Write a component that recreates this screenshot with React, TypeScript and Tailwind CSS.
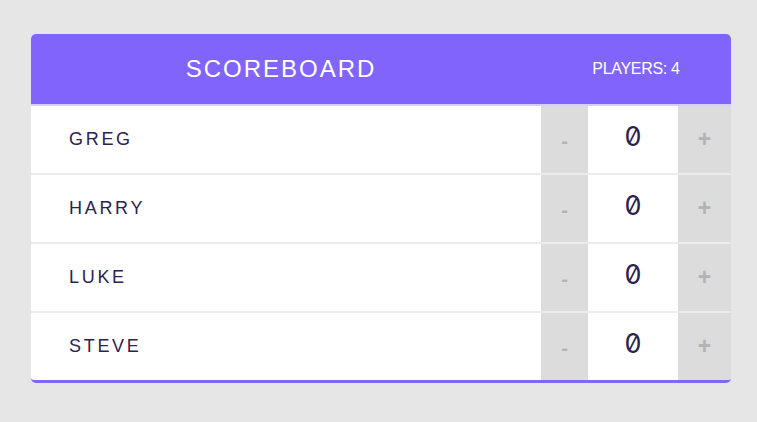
import React, { useState } from 'react';

interface Player {
  name: string;
  score: number;
}

const initialPlayers: Player[] = [
  { name: 'Greg', score: 0 },
  { name: 'Harry', score: 0 },
  { name: 'Luke', score: 0 },
  { name: 'Steve', score: 0 },
];

export default function App() {
  const [players, setPlayers] = useState(initialPlayers);

  const change = (idx: number, delta: number) => {
    setPlayers(p => p.map((pl, i) => (i === idx ? { ...pl, score: pl.score + delta } : pl)));
  };

  return (
    <div className="min-h-[422px] bg-[#e6e6e6] pl-[31px] pt-[34px]" style={{ fontFamily: '"Liberation Sans", Arial, sans-serif' }}>
      <div className="w-[700px] rounded-[5px] overflow-hidden bg-white border-b-[3px] border-[#8066f8]">
        {/* Header */}
        <div className="flex h-[70px] items-center bg-[#8164fb] text-white">
          <h1 className="flex-1 text-center text-[24px] tracking-[2px] uppercase font-normal pr-[10px]">Scoreboard</h1>
          <div className="w-[190px] text-center text-[16px] tracking-[-0.3px] uppercase">Players: {players.length}</div>
        </div>

        {players.map((pl, i) => (
          <div
            key={pl.name}
            className={`flex h-[69px] border-t-2 ${i === 0 ? 'border-[#d6cefc]' : 'border-[#ececec]'}`}
          >
            <div className="flex-1 flex items-center pl-[38px] text-[18px] tracking-[2.7px] uppercase text-[#2a2252]">
              {pl.name}
            </div>
            <button
              onClick={() => change(i, -1)}
              className="w-[47px] bg-[#dcdcdc] text-[#b3b3b3] text-[20px] font-bold flex items-center justify-center pt-[2px]"
            >
              -
            </button>
            <div className="w-[90px] flex items-center justify-center font-['Inter',sans-serif] slashed-zero tabular-nums text-[27px] font-normal text-[#2a2252] pb-[4px]">
              {pl.score}
            </div>
            <button
              onClick={() => change(i, 1)}
              className="w-[53px] bg-[#dcdcdc] text-[#b3b3b3] text-[23px] font-bold flex items-center justify-center pb-[1px]"
            >
              +
            </button>
          </div>
        ))}
      </div>
    </div>
  );
}
